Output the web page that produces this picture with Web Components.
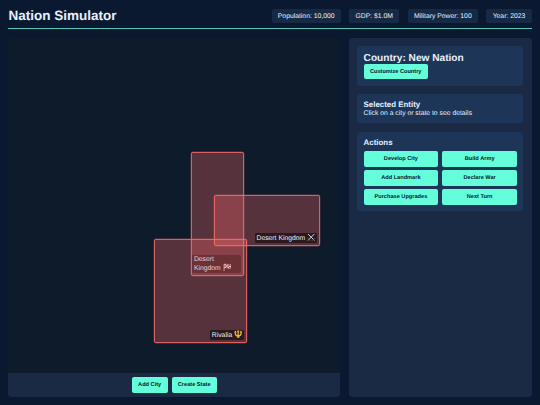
<!DOCTYPE html>
<html lang="en">
<head>
<meta charset="utf-8">
<title>Nation Simulator</title>
<style>
  html, body {
    height: 100%;
    margin: 0;
  }
  body {
    background: #0a192f;
    color: #e6f1ff;
    font-family: "Liberation Sans", Arial, sans-serif;
    font-size: 6.8px;
    text-rendering: geometricPrecision;
  }
</style>
</head>
<body>
<nation-app></nation-app>

<script>
const ICONS = {
  swords: `
    <path d="M2 2 L12.5 12.5 M14 2 L3.5 12.5" stroke="#d3dde2" stroke-width="1.9"/>
    <path d="M1.5 10 L6 14.5 M14.5 10 L10 14.5" stroke="#8b8f95" stroke-width="1.3"/>
    <path d="M3.5 12.5 L1.2 14.8 M12.5 12.5 L14.8 14.8" stroke="#b98a4a" stroke-width="1.8"/>`,
  flag: `
    <path d="M2 1.5 V15.5" stroke="#d9c9c9" stroke-width="1.6"/>
    <path d="M2.5 2 Q6 .8 9 2.4 T15.5 2.4 V10 Q12 11.4 9 10 T2.5 10 Z" fill="#efe4e4"/>
    <path d="M5.5 1.4h3v2.8h-3z M11.5 3h3v2.6h-3z M2.8 4.2h2.7v2.9H2.8z M8.5 4.4h3v2.9h-3z M5.5 7h3v2.8h-3z M11.5 7.8h3v2.6h-3z" fill="#6d5559"/>`,
  trident: `
    <path d="M8 1.5 V15.5 M2.5 3 V6.5 Q2.5 11 8 11 Q13.5 11 13.5 6.5 V3" stroke="#f5b83d" stroke-width="2.3"/>
    <path d="M8 0 L10.4 4 H5.6 Z M2.5 .8 L5.2 5 H.4 Z M13.5 .8 L15.6 5 H10.8 Z" fill="#f5b83d"/>
    <path d="M5 13 H11" stroke="#f5b83d" stroke-width="1.8"/>`
};

class NationButton extends HTMLElement {
  constructor() {
    super();
    this.attachShadow({ mode: 'open' }).innerHTML = `
      <style>
        :host { display: block; }
        button {
          display: block;
          width: 100%;
          height: 15.2px;
          margin: 0;
          padding: .5px 6.3px 0;
          border: 0;
          border-radius: 2px;
          background: #64ffda;
          color: #0a192f;
          font: bold 5.63px/14.7px "Liberation Sans", Arial, sans-serif;
          text-rendering: geometricPrecision;
          white-space: nowrap;
          cursor: pointer;
        }
      </style>
      <button><slot></slot></button>`;
  }
}
customElements.define('nation-button', NationButton);

class NationStat extends HTMLElement {
  constructor() {
    super();
    this.attachShadow({ mode: 'open' }).innerHTML = `
      <style>
        :host {
          display: block;
          padding: 4px 6.3px 2.8px;
          border-radius: 2px;
          background: #172a45;
          line-height: 7.7px;
          white-space: nowrap;
        }
      </style>
      <slot></slot>`;
  }
}
customElements.define('nation-stat', NationStat);

class NationHeader extends HTMLElement {
  constructor() {
    super();
    this.attachShadow({ mode: 'open' }).innerHTML = `
      <style>
        :host {
          display: flex;
          justify-content: space-between;
          align-items: center;
          height: 15.5px;
          padding-bottom: 4.1px;
          border-bottom: 1px solid #55c4b7;
        }
        h1 {
          margin: 0;
          font-size: 13.5px;
          line-height: 15.5px;
        }
        .stats {
          display: flex;
          gap: 8.4px;
        }
      </style>
      <h1><slot name="title"></slot></h1>
      <div class="stats"><slot></slot></div>`;
  }
}
customElements.define('nation-header', NationHeader);

class NationCard extends HTMLElement {
  constructor() {
    super();
    this.attachShadow({ mode: 'open' }).innerHTML = `
      <style>
        :host {
          display: block;
          padding: 6.3px;
          border-radius: 3.4px;
          background: #1d3557;
          line-height: 7.8px;
        }
      </style>
      <slot></slot>`;
  }
}
customElements.define('nation-card', NationCard);

// A territory on the map; x, y, w and h are map coordinates
class NationState extends HTMLElement {
  constructor() {
    super();
    this.attachShadow({ mode: 'open' });
  }

  connectedCallback() {
    const pos = name => this.getAttribute(name) + 'px';
    this.shadowRoot.innerHTML = `
      <style>
        :host {
          position: absolute;
          box-sizing: border-box;
          left: ${pos('x')};
          top: ${pos('y')};
          width: ${pos('w')};
          height: ${pos('h')};
          border: 1px solid rgba(255, 107, 107, .8);
          border-radius: 1.9px;
          background: rgba(255, 107, 107, .3);
          box-shadow: 0 0 0 .4px rgba(255, 107, 107, .4);
        }
        .label {
          position: absolute;
          right: 2.1px;
          bottom: 1.7px;
          box-sizing: border-box;
          max-width: calc(100% - 2.2px);
          padding: 1.4px 1.8px .6px;
          border-radius: 1.3px;
          background: rgba(0, 0, 0, .5);
          line-height: 7.8px;
        }
        svg {
          width: 8.4px;
          height: 8.4px;
          margin: -1px 0 -1.6px;
          vertical-align: -.2px;
        }
      </style>
      <div class="label"><slot></slot> <svg viewBox="0 0 16 16" fill="none">${ICONS[this.getAttribute('icon')]}</svg></div>`;
  }
}
customElements.define('nation-state', NationState);

class NationMap extends HTMLElement {
  constructor() {
    super();
    this.attachShadow({ mode: 'open' }).innerHTML = `
      <style>
        :host {
          display: flex;
          flex-direction: column;
          border-radius: 3.4px;
          background: #0d1b2a;
          overflow: hidden;
        }
        .canvas {
          position: relative;
          flex: 1;
        }
        .tools {
          display: flex;
          justify-content: center;
          gap: 4px;
          padding: 4.1px;
          background: #1a2a45;
        }
      </style>
      <div class="canvas"><slot></slot></div>
      <div class="tools"><slot name="tools"></slot></div>`;
  }
}
customElements.define('nation-map', NationMap);

class NationSidebar extends HTMLElement {
  constructor() {
    super();
    this.attachShadow({ mode: 'open' }).innerHTML = `
      <style>
        :host {
          display: flex;
          flex-direction: column;
          gap: 8.4px;
          padding: 8.4px;
          border-radius: 3.4px;
          background: #1a2a45;
        }
        h2, h3 { margin: 0; }
        h2 {
          padding-top: .8px;
          font-size: 10.13px;
          line-height: 11px;
        }
        h3 { font-size: 7.9px; line-height: 9.1px; }
        p {
          margin: 0;
          padding-top: .5px;
          line-height: 7.3px;
        }
        .customize { display: flex; }
        .actions {
          display: grid;
          grid-template-columns: 1fr 1fr;
          gap: 3.8px 4.2px;
          margin-top: 4.2px;
        }
      </style>
      <nation-card>
        <h2>Country: New Nation</h2>
        <div class="customize"><nation-button>Customize Country</nation-button></div>
      </nation-card>
      <nation-card>
        <h3>Selected Entity</h3>
        <p>Click on a city or state to see details</p>
      </nation-card>
      <nation-card>
        <h3>Actions</h3>
        <div class="actions">
          <nation-button>Develop City</nation-button>
          <nation-button>Build Army</nation-button>
          <nation-button>Add Landmark</nation-button>
          <nation-button>Declare War</nation-button>
          <nation-button>Purchase Upgrades</nation-button>
          <nation-button>Next Turn</nation-button>
        </div>
      </nation-card>`;
  }
}
customElements.define('nation-sidebar', NationSidebar);

class NationApp extends HTMLElement {
  constructor() {
    super();
    this.attachShadow({ mode: 'open' }).innerHTML = `
      <style>
        :host {
          display: flex;
          flex-direction: column;
          gap: 8.6px;
          box-sizing: border-box;
          height: 100vh;
          padding: 8.4px;
        }
        main {
          flex: 1;
          min-height: 0;
          display: grid;
          grid-template-columns: 1fr 182.7px;
          gap: 8.6px;
        }
      </style>
      <nation-header>
        <span slot="title">Nation Simulator</span>
        <nation-stat>Population: 10,000</nation-stat>
        <nation-stat>GDP: $1.0M</nation-stat>
        <nation-stat>Military Power: 100</nation-stat>
        <nation-stat>Year: 2023</nation-stat>
      </nation-header>
      <main>
        <nation-map>
          <nation-state x="182.6" y="114.4" w="53.2" h="123.8" icon="flag">Desert Kingdom</nation-state>
          <nation-state x="205.6" y="157.4" w="106.4" h="50.8" icon="swords">Desert Kingdom</nation-state>
          <nation-state x="145.6" y="201.4" w="93.4" h="103.8" icon="trident">Rivalia</nation-state>
          <nation-button slot="tools">Add City</nation-button>
          <nation-button slot="tools">Create State</nation-button>
        </nation-map>
        <nation-sidebar></nation-sidebar>
      </main>`;
  }
}
customElements.define('nation-app', NationApp);
</script>
</body>
</html>
